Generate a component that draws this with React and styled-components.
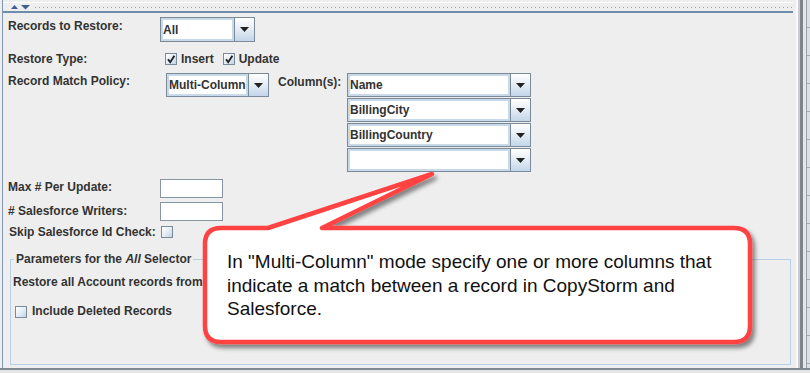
import React from 'react';
import styled, { createGlobalStyle } from 'styled-components';

const GlobalStyle = createGlobalStyle`
  html, body {
    margin: 0;
    padding: 0;
    background: #eeeeee;
  }
  body {
    font-family: "Liberation Sans", Arial, sans-serif;
  }
`;

const Frame = styled.div`
  position: relative;
  width: 810px;
  height: 373px;
  overflow: hidden;
  background: #eeeeee;
  display: flex;
  flex-direction: column;
`;

const Body = styled.div`
  display: flex;
  height: 368px;
  flex: none;
`;

const Pane = styled.div`
  width: 790px;
  margin-left: 2px;
  border-left: 1px solid #8296bb;
  display: flex;
  flex-direction: column;
  flex: none;
`;

const RightEdge = styled.div`
  flex: 1;
  background:
    linear-gradient(to right, #eeeeee 0 3px, #fafafa 3px 5px, #c9cdd1 5px 7px, #7c848c 7px 10px, #e6e6e6 10px 13px, #9aa2aa 13px 14px, transparent 14px),
    repeating-linear-gradient(to bottom, #dcdfe2 0 27px, #a4acb4 27px 28px);
`;

const BottomEdge = styled.div`
  flex: 1;
  background: linear-gradient(to bottom, #80888f 0 2px, #e6e6e6 2px);
`;

const Divider = styled.div`
  height: 13px;
  box-sizing: border-box;
  border-bottom: 2px solid #6e8cab;
  background: linear-gradient(to bottom, transparent 2px, #ffffff 2px 3px, transparent 3px);
  display: flex;
  align-items: flex-start;
  padding: 5px 0 0 8px;
`;

const Dots = styled.div`
  flex: 1;
  height: 1px;
  margin: 2px 0 0 4px;
  background-image: linear-gradient(to right, #9aa2aa 1px, transparent 1px);
  background-size: 4px 1px;
  background-repeat: repeat-x;
`;

const Form = styled.div`
  display: flex;
  flex-direction: column;
  padding-left: 5px;
`;

const Row = styled.div`
  display: flex;
  align-items: ${(p) => p.$align || 'flex-start'};
  height: ${(p) => p.$h}px;
  margin-top: ${(p) => p.$mt}px;
  flex: none;
`;

const Label = styled.div`
  width: ${(p) => p.$w || 152}px;
  box-sizing: border-box;
  padding-top: ${(p) => p.$pt || 0}px;
  padding-left: ${(p) => p.$pl || 0}px;
  margin-left: ${(p) => p.$ml || 0}px;
  flex: none;
  font-size: 12px;
  font-weight: bold;
  line-height: 15px;
  color: #333333;
  white-space: nowrap;
`;

const ComboBox = styled.div`
  display: flex;
  width: ${(p) => p.$w}px;
  height: ${(p) => p.$h || 24}px;
  margin-left: ${(p) => p.$ml || 0}px;
  box-sizing: border-box;
  border: 1px solid #7a8a99;
  background: #ffffff;
  flex: none;
`;

const ComboField = styled.div`
  flex: 1;
  min-width: 0;
  display: flex;
  align-items: center;
  padding-left: 2px;
  box-shadow: inset 0 0 0 2px #c8d9ea;
  font-size: 12px;
  font-weight: bold;
  color: #333333;
  white-space: nowrap;
`;

const ComboArrow = styled.div`
  width: 19px;
  flex: none;
  border-left: 1px solid #7a8a99;
  background: linear-gradient(to bottom, #ffffff, #e7eef6 45%, #c3d6e9);
  display: flex;
  align-items: center;
  justify-content: center;
`;

const ColumnStack = styled.div`
  display: flex;
  flex-direction: column;
  gap: 1px;
`;

const CheckItem = styled.label`
  display: flex;
  align-items: center;
  gap: ${(p) => p.$gap || 4}px;
  margin-left: ${(p) => p.$ml || 0}px;
  margin-top: ${(p) => p.$mt || 0}px;
  font-size: 12px;
  font-weight: bold;
  color: #333333;
  line-height: 15px;
  white-space: nowrap;
`;

const Box = styled.span`
  width: 12px;
  height: 12px;
  box-sizing: border-box;
  border: 1px solid #7a8a99;
  background: linear-gradient(135deg, #ffffff, #e2ebf5 55%, #c0d3e6);
  display: inline-flex;
  align-items: center;
  justify-content: center;
  flex: none;
  margin-left: ${(p) => p.$ml || 0}px;
`;

const TextField = styled.div`
  width: 63px;
  height: 19px;
  box-sizing: border-box;
  border: 1px solid #8796a4;
  background: #ffffff;
  flex: none;
`;

const GroupBox = styled.div`
  margin: 21px 0 0 2px;
  width: 781px;
  height: 106px;
  box-sizing: border-box;
  border: 1px solid #b8cfe5;
  display: flex;
  flex-direction: column;
  flex: none;
`;

const GroupTitle = styled.div`
  align-self: flex-start;
  margin: -8px 0 0 3px;
  padding: 0 2px;
  background: #eeeeee;
  font-size: 12px;
  font-weight: bold;
  line-height: 15px;
  color: #333333;
  white-space: nowrap;
`;

const GroupText = styled.div`
  margin: 8px 0 0 2px;
  font-size: 12px;
  font-weight: bold;
  line-height: 15px;
  color: #333333;
  white-space: nowrap;
`;

const CalloutShape = styled.svg`
  position: absolute;
  left: 0;
  top: 0;
  pointer-events: none;
`;

const CalloutText = styled.div`
  position: absolute;
  left: 227px;
  top: 250px;
  font-size: 19px;
  line-height: 23.5px;
  color: #111111;
  white-space: nowrap;
`;

const Arrow = () => (
  <svg width="9" height="5" viewBox="0 0 9 5">
    <polygon points="0,0 9,0 4.5,5" fill="#222" />
  </svg>
);

const Check = () => (
  <svg width="10" height="10" viewBox="0 0 10 10">
    <path d="M2 5.2 L4.2 8.2 L8.4 1.8" fill="none" stroke="#222" strokeWidth="1.9" />
  </svg>
);

const Combo = ({ value, w, h, ml }) => (
  <ComboBox $w={w} $h={h} $ml={ml}>
    <ComboField>{value}</ComboField>
    <ComboArrow>
      <Arrow />
    </ComboArrow>
  </ComboBox>
);

const CheckBox = ({ checked, ml }) => <Box $ml={ml}>{checked && <Check />}</Box>;

const columns = ['Name', 'BillingCity', 'BillingCountry', ''];

export default function App() {
  return (
    <>
      <GlobalStyle />
      <Frame>
        <Body>
          <Pane>
            <Divider>
              <svg width="20" height="5" viewBox="0 0 20 5">
                <polygon points="0,4 3.5,0 7,4" fill="#3f5f91" />
                <polygon points="10,0 19,0 14.5,4.5" fill="#3f5f91" />
              </svg>
              <Dots />
            </Divider>
            <Form>
              <Row $mt={4} $h={25}>
                <Label $pt={2}>Records to Restore:</Label>
                <Combo value="All" w={95} h={25} />
              </Row>
              <Row $mt={9} $h={16} $align="center">
                <Label>Restore Type:</Label>
                <CheckItem $ml={5}>
                  <CheckBox checked />
                  Insert
                </CheckItem>
                <CheckItem $ml={9}>
                  <CheckBox checked />
                  Update
                </CheckItem>
              </Row>
              <Row $mt={6} $h={99}>
                <Label $pt={1}>Record Match Policy:</Label>
                <Combo value="Multi-Column" w={103} ml={6} />
                <Label $w={69} $pt={2} $ml={9}>
                  Column(s):
                </Label>
                <ColumnStack>
                  {columns.map((c, i) => (
                    <Combo key={i} value={c} w={184} />
                  ))}
                </ColumnStack>
              </Row>
              <Row $mt={7} $h={19}>
                <Label $pt={1}>Max # Per Update:</Label>
                <TextField />
              </Row>
              <Row $mt={4} $h={19}>
                <Label $pt={2}># Salesforce Writers:</Label>
                <TextField />
              </Row>
              <Row $mt={5} $h={12} $align="center">
                <Label $pl={1}>Skip Salesforce Id Check:</Label>
                <CheckBox ml={1} />
              </Row>
              <GroupBox>
                <GroupTitle>
                  Parameters for the <i>All</i> Selector
                </GroupTitle>
                <GroupText>Restore all Account records from</GroupText>
                <CheckItem $ml={4} $gap={5} $mt={14}>
                  <CheckBox />
                  Include Deleted Records
                </CheckItem>
              </GroupBox>
            </Form>
          </Pane>
          <RightEdge />
        </Body>
        <BottomEdge />

        <CalloutShape width="810" height="373" viewBox="0 0 810 373">
          <defs>
            <filter id="shadow" x="-10%" y="-10%" width="130%" height="140%">
              <feDropShadow dx="3" dy="4" stdDeviation="2" floodColor="#000" floodOpacity="0.45" />
            </filter>
          </defs>
          <path
            d="M221 228 L268 228 L432 174 L322 228 L734 228 Q750 228 750 244 L750 326 Q750 342 734 342 L221 342 Q205 342 205 326 L205 244 Q205 228 221 228 Z"
            fill="#ffffff"
            stroke="#ff4343"
            strokeWidth="4.5"
            strokeLinejoin="round"
            filter="url(#shadow)"
          />
        </CalloutShape>
        <CalloutText>
          In "Multi-Column" mode specify one or more columns that
          <br />
          indicate a match between a record in CopyStorm and
          <br />
          Salesforce.
        </CalloutText>
      </Frame>
    </>
  );
}
